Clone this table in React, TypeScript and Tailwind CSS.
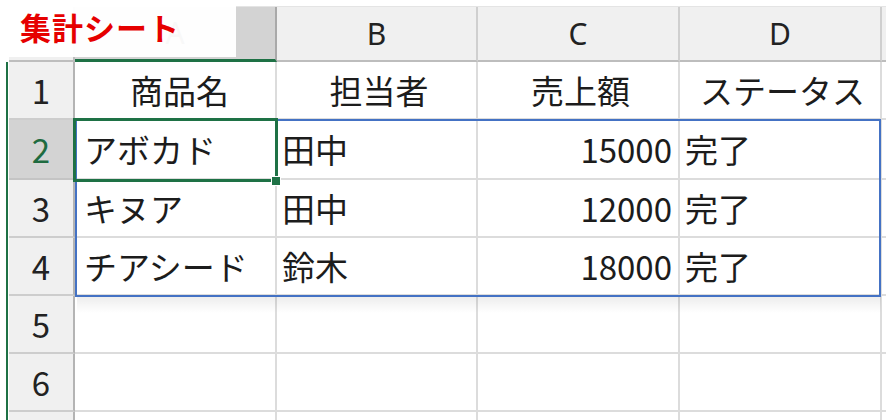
const JP = "font-['Noto_Sans_CJK_JP','Noto_Sans',sans-serif]"

const COLS = [
  { key: 'A', w: 'w-[202px]' },
  { key: 'B', w: 'w-[201px]' },
  { key: 'C', w: 'w-[202px]' },
  { key: 'D', w: 'w-[202px]' },
]

const ROWS: { h: string; cells: string[] }[] = [
  { h: 'h-[58px]', cells: ['商品名', '担当者', '売上額', 'ステータス'] },
  { h: 'h-[60px]', cells: ['アボカド', '田中', '15000', '完了'] },
  { h: 'h-[58px]', cells: ['キヌア', '田中', '12000', '完了'] },
  { h: 'h-[58px]', cells: ['チアシード', '鈴木', '18000', '完了'] },
  { h: 'h-[58px]', cells: ['', '', '', ''] },
  { h: 'h-[58px]', cells: ['', '', '', ''] },
  { h: 'h-[58px]', cells: ['', '', '', ''] },
]

function HeaderRow() {
  return (
    <div className="flex h-[56px] mt-[6px] border-t border-[#e4e4e4]">
      <div className="w-[9px] shrink-0 bg-white" />
      <div className="w-[66px] shrink-0 bg-[#f0f0f0] border-r-2 border-b-2 border-[#bdbdbd]" />
      {COLS.map((c) => (
        <div
          key={c.key}
          className={`${c.w} shrink-0 flex items-center justify-center text-[30px] text-[#222] font-['Noto_Sans',sans-serif] ${
            c.key === 'A'
              ? 'bg-[#d3d3d3] border-r-2 border-r-[#a9a9a9] border-b-[3px] border-b-[#1e7145]'
              : 'bg-[#f0f0f0] border-r-2 border-r-[#cfcfcf] border-b-2 border-b-[#bdbdbd]'
          }`}
        >
          {c.key}
        </div>
      ))}
      <div className="flex-1 bg-[#f0f0f0] border-b-2 border-[#bdbdbd]" />
    </div>
  )
}

function BodyRow({ n, h, cells }: { n: number; h: string; cells: string[] }) {
  const selected = n === 2
  return (
    <div className={`flex ${h}`}>
      <div className="w-[9px] shrink-0 flex justify-end bg-white">
        <div className="w-[2px] h-full bg-[#1e7145] mr-[1px]" />
      </div>
      <div
        className={`w-[66px] shrink-0 flex items-center justify-center text-[33px] border-r-2 border-b-2 ${
          selected
            ? 'bg-[#d3d3d3] text-[#1e6b40] border-r-[#a9a9a9] border-b-[#c4c4c4]'
            : 'bg-[#f0f0f0] text-[#222] border-r-[#b4b4b4] border-b-[#cdcdcd]'
        }`}
      >
        {n < 7 ? n : ''}
      </div>
      {COLS.map((c, i) => {
        const isNum = i === 2 && /^\d+$/.test(cells[i])
        return (
          <div
            key={c.key}
            className={`${c.w} shrink-0 flex items-center border-r-2 border-b-2 border-[#dcdcdc] text-[33px] text-[#1c1c1c] whitespace-nowrap overflow-hidden ${
              isNum ? 'justify-end pr-[6px]' : i === 0 ? 'pl-[9px]' : 'pl-[5px]'
            } ${n === 1 ? 'justify-center px-0' : ''}`}
          >
            {cells[i]}
          </div>
        )
      })}
      <div className="flex-1 border-b-2 border-[#dcdcdc]" />
    </div>
  )
}

export default function App() {
  return (
    <div className={`relative w-[886px] h-[420px] overflow-hidden bg-white leading-none ${JP}`}>
      <HeaderRow />
      {ROWS.map((r, i) => (
        <BodyRow key={i} n={i + 1} h={r.h} cells={r.cells} />
      ))}

      {/* range outline A2:D4 */}
      <div className="absolute left-[75px] top-[119px] w-[806px] h-[178px] border-2 border-[#4472c4] pointer-events-none" />
      <div className="absolute left-[77px] top-[297px] w-[804px] h-[16px] bg-gradient-to-b from-black/[0.07] to-transparent pointer-events-none" />

      {/* active cell A2 */}
      <div className="absolute left-[73px] top-[118px] w-[205px] h-[64px] border-[3px] border-[#1e7145] pointer-events-none" />
      <div className="absolute left-[271px] top-[176px] w-[10px] h-[10px] bg-[#1e7145] border border-white pointer-events-none" />

      {/* sheet label */}
      <div className="absolute left-0 top-0 w-[236px] h-[57px] bg-white/[0.97] flex items-center pl-[20px] pb-[4px]">
        <span className="text-[31px] font-bold text-[#e60000] tracking-[1px]">集計シート</span>
      </div>
    </div>
  )
}
